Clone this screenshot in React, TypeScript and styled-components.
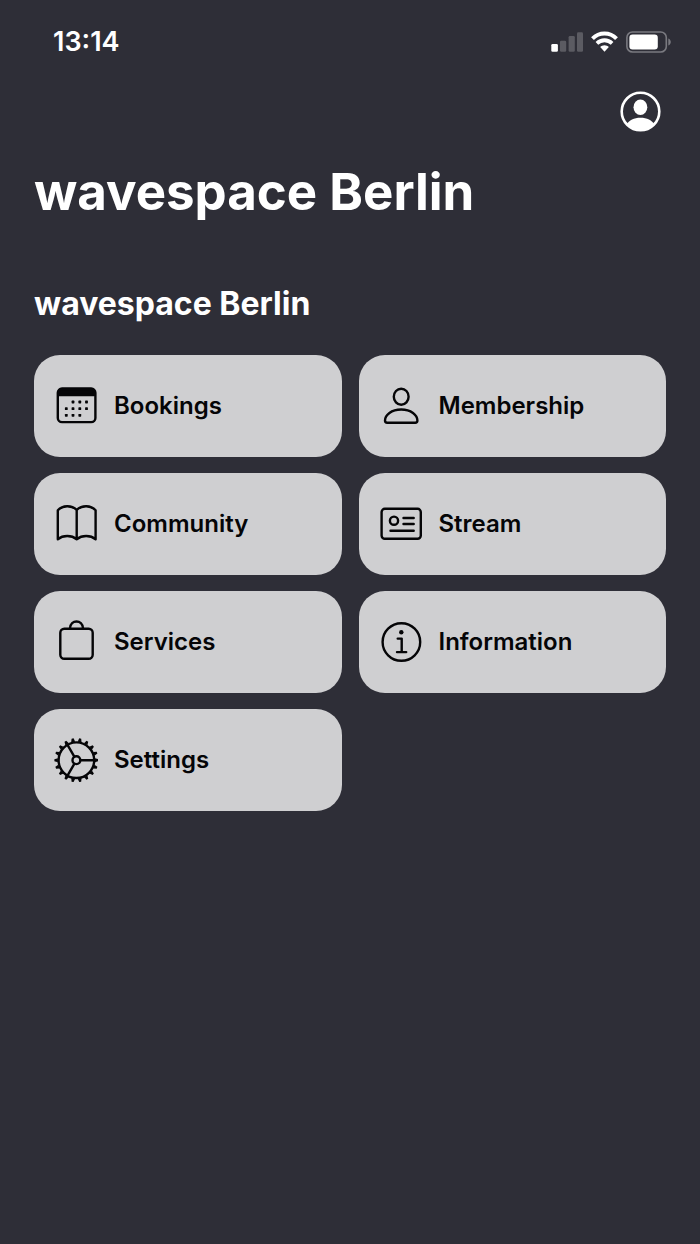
import React from "react";
import styled, { createGlobalStyle } from "styled-components";

const GlobalStyle = createGlobalStyle`
  *, *::before, *::after { box-sizing: border-box; }
  body {
    margin: 0;
    background: #2e2e37;
    font-family: Inter, "Liberation Sans", sans-serif;
    -webkit-font-smoothing: antialiased;
  }
`;

const Screen = styled.div`
  min-height: 100vh;
  display: flex;
  flex-direction: column;
  background: #2e2e37;
  color: #ffffff;
`;

const StatusBar = styled.header`
  display: flex;
  align-items: center;
  justify-content: space-between;
  padding: 26px 29px 0 53px;
`;

const Time = styled.time`
  font-size: 27px;
  line-height: 32px;
  font-weight: 600;
`;

const StatusIcons = styled.div`
  display: flex;
  align-items: center;
  gap: 8px;

  svg { display: block; }
`;

const Toolbar = styled.div`
  display: flex;
  justify-content: flex-end;
  padding: 33px 39px 0;
`;

const AvatarButton = styled.button`
  width: 41px;
  height: 41px;
  padding: 0;
  border: 0;
  background: none;
  color: inherit;
  cursor: pointer;

  svg { display: block; }
`;

const Content = styled.main`
  padding: 28px 34px 34px;
`;

const Title = styled.h1`
  margin: 0;
  font-size: 51px;
  line-height: 64px;
  font-weight: 700;
`;

const SectionTitle = styled.h2`
  margin: 60px 0 31px;
  font-size: 32px;
  line-height: 40px;
  font-weight: 700;
`;

const Grid = styled.nav`
  display: grid;
  grid-template-columns: repeat(2, minmax(0, 1fr));
  gap: 16px 17px;
`;

const Card = styled.button`
  display: flex;
  align-items: center;
  gap: 16px;
  height: 102px;
  padding: 0 20px;
  border: 0;
  border-radius: 26px;
  background: #cfcfd1;
  color: #050507;
  font-family: inherit;
  text-align: left;
  cursor: pointer;
`;

const CardLabel = styled.span`
  font-size: 24px;
  line-height: 32px;
  font-weight: 600;
`;

const Glyph = styled.svg`
  display: block;
  flex: none;
  width: 44px;
  height: 44px;
  fill: none;
  stroke: currentColor;
  stroke-width: 2.4;
  stroke-linecap: round;
  stroke-linejoin: round;
`;

const DOTS = [
  [19, 18], [25.8, 18], [32.5, 18],
  [12.3, 24.7], [19, 24.7], [25.8, 24.7], [32.5, 24.7],
  [12.3, 31.3], [19, 31.3], [25.8, 31.3],
];

const CalendarIcon = () => (
  <Glyph viewBox="0 0 44 44" aria-hidden="true">
    <rect x="3.8" y="4.5" width="37.6" height="33.6" rx="4.2" />
    <path d="M5 11V7.5A2 2 0 0 1 7 5.5H38a2 2 0 0 1 2 2V11Z" fill="currentColor" />
    <g fill="currentColor" stroke="none">
      {DOTS.map(([x, y]) => (
        <rect key={`${x}-${y}`} x={x - 1.4} y={y - 1.4} width="2.8" height="2.8" rx="0.6" />
      ))}
    </g>
  </Glyph>
);

const PersonIcon = () => (
  <Glyph viewBox="0 0 44 44" aria-hidden="true">
    <ellipse cx="22.2" cy="12.7" rx="7.4" ry="8" />
    <path d="M8.2 38.8H36.2Q38.4 38.8 38.4 36.6C38.4 31 32 25.5 22.2 25.5S6 31 6 36.6Q6 38.8 8.2 38.8Z" />
  </Glyph>
);

const BookIcon = () => (
  <Glyph viewBox="0 0 44 44" aria-hidden="true">
    <path d="M22.7 7.8C17.5 3 8.7 3 3.8 8.3V37.2C9 33 17.5 33 22.7 37.2C28 33 36.4 33 41.6 37.2V8.3C36.7 3 28 3 22.7 7.8V37.2" />
  </Glyph>
);

const StreamIcon = () => (
  <Glyph viewBox="0 0 44 44" aria-hidden="true">
    <rect x="2.6" y="6.8" width="39.2" height="30" rx="3.2" />
    <circle cx="15" cy="18.7" r="4.1" />
    <path d="M24.5 16H34.7M24.5 22H34.7M11.5 28.7H34.7" />
  </Glyph>
);

const BagIcon = () => (
  <Glyph viewBox="0 0 44 44" aria-hidden="true">
    <rect x="6.3" y="8.7" width="32.4" height="30" rx="4" />
    <path d="M16 8.3C16.5 -.8 28.5 -.8 29 8.3" />
  </Glyph>
);

const InfoIcon = () => (
  <Glyph viewBox="0 0 44 44" aria-hidden="true">
    <circle cx="22.4" cy="22" r="18.8" />
    <circle cx="22.3" cy="12.3" r="2.2" fill="currentColor" stroke="none" />
    <path d="M18.7 18.6H22.7V32.1M18 32.1H27.2" />
  </Glyph>
);

const TEETH = Array.from({ length: 18 }, (_, i) => i * 20);

const GearIcon = () => (
  <Glyph viewBox="0 0 44 44" aria-hidden="true">
    <g transform="translate(22.4 22.2)">
      <circle r="17.8" />
      <circle r="3.9" />
      {[0, 120, 240].map((a) => (
        <path key={a} d="M4.5 0H17.5" transform={`rotate(${a})`} />
      ))}
      {TEETH.map((a) => (
        <path key={a} d="M18.5 -2L22 -1V1L18.5 2Z" fill="currentColor" stroke="none" transform={`rotate(${a})`} />
      ))}
    </g>
  </Glyph>
);

const SignalIcon = () => (
  <svg width="32" height="22" viewBox="0 0 32 22" fill="#5b5b62" role="img" aria-label="Signal strength">
    <rect x="0.3" y="13" width="6.6" height="7.8" rx="1.3" fill="#ffffff" />
    <rect x="9" y="9.8" width="6.2" height="11" rx="1.3" />
    <rect x="17.6" y="5" width="6.2" height="15.8" rx="1.3" />
    <rect x="26" y="1.3" width="6" height="19.5" rx="1.3" />
  </svg>
);

const WifiIcon = () => (
  <svg width="27" height="22" viewBox="0 0 27 22" fill="none" stroke="#ffffff" role="img" aria-label="Wi-Fi">
    <path d="M1.5 7.6C8.2 .9 18.8 .9 25.5 7.6" strokeWidth="4" />
    <path d="M5.9 12.3C10.2 8.2 16.8 8.2 21.1 12.3" strokeWidth="3.8" />
    <path d="M13.5 14.2C11.9 14.2 10.2 14.9 9.2 16L13.5 20.7L17.8 16C16.8 14.9 15.1 14.2 13.5 14.2Z" fill="#ffffff" stroke="none" />
  </svg>
);

const BatteryIcon = () => (
  <svg width="45" height="22" viewBox="0 0 45 22" fill="none" role="img" aria-label="Battery">
    <rect x="0.9" y="1" width="39.4" height="20" rx="5.6" stroke="#7a7a80" strokeWidth="1.6" />
    <rect x="3.4" y="3.6" width="28.4" height="14.8" rx="3.2" fill="#ffffff" />
    <path d="M42.3 7.5C45.6 8.7 45.6 13.3 42.3 14.5Z" fill="#7a7a80" />
  </svg>
);

const AvatarIcon = () => (
  <svg width="41" height="41" viewBox="0 0 41 41" fill="none" aria-hidden="true">
    <circle cx="20.5" cy="20.5" r="18.8" stroke="#ffffff" strokeWidth="2.6" />
    <ellipse cx="20.4" cy="16.3" rx="6.9" ry="7.7" fill="#ffffff" />
    <path d="M6.5 33.5C9 29.3 14 26.7 20.5 26.7S32 29.3 34.5 33.5A19 19 0 0 1 6.5 33.5Z" fill="#ffffff" />
  </svg>
);

const items = [
  { label: "Bookings", Icon: CalendarIcon },
  { label: "Membership", Icon: PersonIcon },
  { label: "Community", Icon: BookIcon },
  { label: "Stream", Icon: StreamIcon },
  { label: "Services", Icon: BagIcon },
  { label: "Information", Icon: InfoIcon },
  { label: "Settings", Icon: GearIcon },
];

export default function App() {
  return (
    <>
      <GlobalStyle />
      <Screen>
        <StatusBar>
          <Time>13:14</Time>
          <StatusIcons>
            <SignalIcon />
            <WifiIcon />
            <BatteryIcon />
          </StatusIcons>
        </StatusBar>
        <Toolbar>
          <AvatarButton type="button" aria-label="Profile">
            <AvatarIcon />
          </AvatarButton>
        </Toolbar>
        <Content>
          <Title>wavespace Berlin</Title>
          <SectionTitle>wavespace Berlin</SectionTitle>
          <Grid>
            {items.map(({ label, Icon }) => (
              <Card key={label} type="button">
                <Icon />
                <CardLabel>{label}</CardLabel>
              </Card>
            ))}
          </Grid>
        </Content>
      </Screen>
    </>
  );
}
